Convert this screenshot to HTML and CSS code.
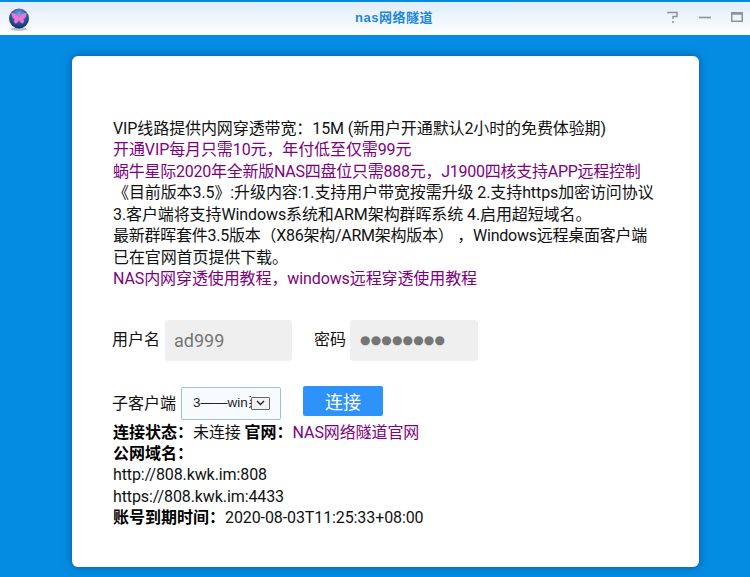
FILE: index.html
```html
<!DOCTYPE html>
<html lang="zh-CN">
<head>
<meta charset="utf-8">
<title>nas网络隧道</title>
<link rel="stylesheet" href="styles.css">
</head>
<body>
<header class="titlebar">
  <svg class="logo" width="22" height="24" viewBox="0 0 22 24">
    <defs>
      <radialGradient id="orb" cx="50%" cy="30%" r="70%">
        <stop offset="0" stop-color="#7fa8e0"/>
        <stop offset="0.55" stop-color="#2c5aa8"/>
        <stop offset="1" stop-color="#14305f"/>
      </radialGradient>
    </defs>
    <ellipse cx="11" cy="21" rx="8" ry="1.8" fill="#8a9aa8" opacity="0.6"/>
    <circle cx="11" cy="10.5" r="10" fill="url(#orb)"/>
    <path d="M10.6 9 C8.5 5.5 5.5 4.5 3.5 5 C3.6 8 4.6 10.6 7 11.2 C5.6 12 5.6 14.5 7.4 15.6 C9 15.4 10.4 13.6 11 12 C11.6 13.6 13 15.4 14.6 15.6 C16.4 14.5 16.4 12 15 11.2 C17.4 10.6 18.4 8 18.5 5 C16.5 4.5 13.5 5.5 11.4 9 Z" fill="#f272d6"/>
  </svg>
  <h1 class="title">nas网络隧道</h1>
  <div class="controls">
    <svg width="12" height="12" viewBox="0 0 12 12"><path d="M1 2.5V1.5H10V5.5H6V8M6 10V12" fill="none" stroke="#8d949b" stroke-width="1.5"/></svg>
    <svg width="12" height="12" viewBox="0 0 12 12"><path d="M0 6.5H12" stroke="#8d949b" stroke-width="1.6"/></svg>
    <svg width="12" height="10" viewBox="0 0 12 10"><path d="M0.75 0.75H11.25V9.25H0.75Z M0.75 2H11.25" fill="none" stroke="#8d949b" stroke-width="1.5"/></svg>
  </div>
</header>
<main class="stage">
  <section class="card">
    <p class="notice">VIP线路提供内网穿透带宽：15M (新用户开通默认2小时的免费体验期)<br>
    <a class="link">开通VIP每月只需10元，年付低至仅需99元</a><br>
    <a class="link tight">蜗牛星际2020年全新版NAS四盘位只需888元，J1900四核支持APP远程控制</a><br>
    《目前版本3.5》:升级内容:1.支持用户带宽按需升级 2.支持https加密访问协议<br>
    3.客户端将支持Windows系统和ARM架构群晖系统 4.启用超短域名。<br>
    <span class="tight">最新群晖套件3.5版本（X86架构/ARM架构版本） ，Windows远程桌面客户端</span><br>
    已在官网首页提供下载。<br>
    <a class="link">NAS内网穿透使用教程，windows远程穿透使用教程</a></p>
    <div class="login">
      <label class="field-label">用户名</label>
      <div class="input">ad999</div>
      <label class="field-label pass-label">密码</label>
      <div class="input dots">●●●●●●●●</div>
    </div>
    <div class="client">
      <label class="field-label client-label">子客户端</label>
      <div class="select">
        <span class="select-text">3——win系统</span>
        <span class="select-arrow"><svg width="9" height="6" viewBox="0 0 9 6"><path d="M1 1L4.5 4.5L8 1" fill="none" stroke="#222" stroke-width="1.3"/></svg></span>
      </div>
      <button class="connect">连接</button>
    </div>
    <div class="status">
      <div><b>连接状态：</b>未连接 <b>官网：</b><a class="link">NAS网络隧道官网</a></div>
      <div><b>公网域名：</b></div>
      <div>http://808.kwk.im:808</div>
      <div>https://808.kwk.im:4433</div>
      <div><b>账号到期时间：</b>2020-08-03T11:25:33+08:00</div>
    </div>
  </section>
</main>
</body>
</html>
```
FILE: styles.css
```css
* { box-sizing: border-box; }
html, body { margin: 0; height: 100%; }
body {
  width: 750px;
  height: 577px;
  overflow: hidden;
  background: #048ce3;
  font-family: Roboto, "Noto Sans CJK SC", sans-serif;
  font-size: 16px;
  line-height: 21.43px;
  color: #111;
}
.titlebar {
  height: 33px;
  margin-top: 2px;
  background: linear-gradient(#dfecfa, #ffffff);
  display: flex;
  align-items: center;
  padding: 0 7px 0 8px;
  position: relative;
}
.logo { display: block; margin-top: 2px; }
.title {
  position: absolute;
  left: 355px;
  top: 6px;
  margin: 0;
  font-size: 13px;
  line-height: 20px;
  font-weight: 700;
  letter-spacing: 0.5px;
  color: #1a87dd;
  font-family: "Liberation Sans", "Noto Sans CJK SC", sans-serif;
}
.controls {
  margin-left: auto;
  display: flex;
  align-items: center;
  gap: 20px;
  margin-top: -3px;
}
.stage { padding: 21px 51px 0 72px; }
.card {
  height: 511px;
  background: #fff;
  border-radius: 6px;
  box-shadow: 0 0 8px rgba(20, 50, 90, 0.55);
  padding: 62px 30px 0 41px;
}
.notice { margin: 0; white-space: nowrap; letter-spacing: -0.1px; }
.link { color: #800080; }
.tight { letter-spacing: -0.25px; }
.login {
  display: flex;
  align-items: center;
  margin-top: 30px;
}
.field-label { font-size: 16px; color: #111; margin-right: 5px; margin-left: -1px; }
.client-label { margin-top: 1px; }
.pass-label { margin-left: 22px; margin-right: 4px; }
.input {
  width: 127px;
  height: 41px;
  border-radius: 3px;
  background: #efefef;
  color: #757575;
  font-size: 18px;
  line-height: 41px;
  padding-left: 9px;
}
.dots {
  width: 128px;
  font-size: 12px;
  letter-spacing: 0.15px;
  font-family: "DejaVu Sans", sans-serif;
  padding-left: 10px;
}
.client {
  display: flex;
  align-items: center;
  margin-top: 25px;
  height: 35px;
}
.select {
  width: 100px;
  height: 33px;
  border: 1px solid #9cc3dd;
  border-radius: 2px;
  background: #f7fbfe;
  display: flex;
  align-items: center;
  padding-left: 11px;
  font: 13.5px/20px "Liberation Sans", "Noto Sans CJK SC", sans-serif;
  color: #222;
}
.select-text {
  width: 58px;
  overflow: hidden;
  white-space: nowrap;
}
.select-arrow {
  width: 19px;
  height: 13px;
  border: 1px solid #666;
  background: #f2f2f2;
  display: flex;
  align-items: center;
  justify-content: center;
  border-radius: 1px;
}
.connect {
  margin-left: 22px;
  margin-top: -5px;
  width: 80px;
  height: 30px;
  border: 0;
  border-radius: 2px;
  background: #2d93fb;
  color: #fff;
  font: 18px/30px "Noto Sans CJK SC", sans-serif;
  padding: 0;
}
.status { margin-top: 1px; letter-spacing: -0.1px; }
.status b { color: #000; letter-spacing: 0; }
```
